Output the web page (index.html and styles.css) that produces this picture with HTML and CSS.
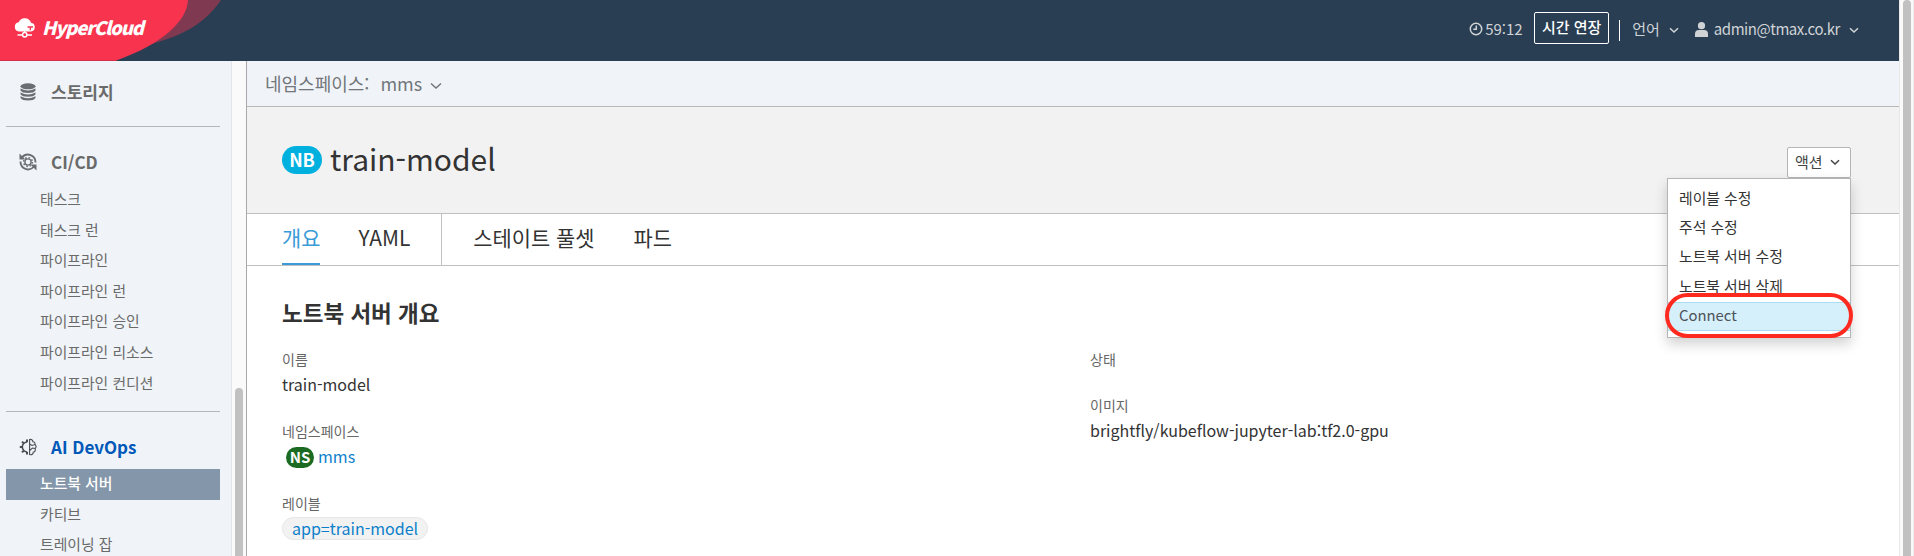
FILE: index.html
```html
<!DOCTYPE html>
<html lang="ko">
<head>
<meta charset="utf-8">
<title>HyperCloud</title>
<link rel="stylesheet" href="styles.css">
</head>
<body>
<div class="window">
  <div class="app">
    <header class="masthead">
      <div class="brand">
        <svg class="brand-bg" width="240" height="61" viewBox="0 0 240 61"><path fill="#7f3950" d="M100 0H221C207 20 190 33 155 43L100 61Z"/><path fill="#f7334e" d="M0 0H188C187 20 165 43 115 61H0Z"/><path fill="#d52f4b" d="M0 60H117L114 61H0Z"/></svg>
        <div class="brand-name">
          <svg width="22" height="20" viewBox="0 0 22 20"><path fill="#fff" d="M5 13.500a4.700 4.700 0 0 1-.3-9.300A6.600 6.600 0 0 1 17 4.800 4.400 4.400 0 0 1 17 13.500Z"/><path stroke="#f7334e" stroke-width="1.300" fill="none" d="M13.500 9h5.500M16.300 9V12.200"/><path stroke="#fff" stroke-width="1.300" fill="none" d="M3.500 17h5M13 17h5M10.700 12v3"/><circle cx="10.700" cy="16.800" r="2.200" fill="#f7334e" stroke="#fff" stroke-width="1.500"/></svg>
          <span>HyperCloud</span>
        </div>
      </div>
      <div class="tools">
        <svg class="clock" width="14" height="14" viewBox="0 0 14 14"><circle cx="7" cy="7" r="5.700"/><path d="M7.300 3.500V7.300H4.300"/></svg>
        <span class="time">59:12</span>
        <button class="extend">시간 연장</button>
        <span class="bar"></span>
        <span class="lang">언어</span>
        <svg class="chev c1" width="10" height="7" viewBox="0 0 10 7"><path d="M1 1.200 5 5 9 1.200"/></svg>
        <svg class="user" width="13" height="15" viewBox="0 0 13 15"><circle cx="6.500" cy="3.700" r="3.600"/><path d="M0 15V12Q0 8 4 8H9Q13 8 13 12V15Z"/></svg>
        <span class="mail">admin@tmax.co.kr</span>
        <svg class="chev c2" width="10" height="7" viewBox="0 0 10 7"><path d="M1 1.200 5 5 9 1.200"/></svg>
      </div>
    </header>
    <div class="body">
      <nav class="sidebar">
        <div class="side-list">
          <section class="group storage">
            <h2><svg width="18" height="18" viewBox="0 0 18 18"><g fill="#6a6e73"><ellipse cx="9" cy="3.300" rx="7.500" ry="3"/><path d="M1.500 5.500Q9 9.700 16.500 5.500V7.500Q15 10 9 10T1.500 7.500Z"/><path d="M1.500 9.500Q9 13.700 16.500 9.500V11.200Q15 13.700 9 13.700T1.500 11.200Z"/><path d="M1.500 13.200Q9 17.400 16.500 13.200V15Q15 17.500 9 17.500T1.500 15Z"/></g></svg>스토리지</h2>
          </section>
          <section class="group cicd">
            <h2><svg width="18" height="18" viewBox="0 0 18 18"><g fill="none" stroke="#6a6e73"><circle cx="9" cy="9" r="3.100" stroke-width="1.400"/><circle cx="9" cy="9" r="4.400" stroke-width="1.500" stroke-dasharray="1.600 1.856"/><path stroke-width="1.900" d="M3 4.500A7.600 7.600 0 0 1 16.500 9.500M15 13.500A7.600 7.600 0 0 1 1.500 8.500"/></g><path fill="#6a6e73" d="M.5.500V6.500H6.500ZM17.500 17.500V11.500H11.500Z"/></svg>CI/CD</h2>
            <a>태스크</a><a>태스크 런</a><a>파이프라인</a><a>파이프라인 런</a><a>파이프라인 승인</a><a>파이프라인 리소스</a><a>파이프라인 컨디션</a>
          </section>
          <section class="group ai">
            <h2><svg width="18" height="18" viewBox="0 0 18 18"><g fill="none" stroke="#4a4d50"><path stroke-width="1.600" d="M8.300 4A5 5 0 0 0 8.300 14"/><path stroke-width="2" d="M8 1.500V4M8 14V16.500M4.800 5.400 3 3.600M4.800 12.600 3 14.400M3.500 9H.8"/><path stroke-width="1.100" d="M10.600 1.500V16.500C13 17.200 14.300 15.800 14.200 14.200 16.300 13.800 16.800 12 16 10.500 17.500 9.500 17.300 7.300 16 6.500 16.400 4.800 15.300 3.700 14 3.800 13.700 1.800 12.300 1 10.600 1.500ZM10.600 6 13 7.500 16 6.500M10.600 12.500 13.500 10 16 10.500"/></g></svg>AI DevOps</h2>
            <a class="active">노트북 서버</a><a>카티브</a><a>트레이닝 잡</a>
          </section>
        </div>
        <div class="side-track"><div class="side-thumb"></div></div>
      </nav>
      <main class="main">
        <div class="ns-bar"><span>네임스페이스:</span><span class="ns">mms</span><svg class="chev" width="12" height="8" viewBox="0 0 12 8"><path d="M1 1.500 6 6 11 1.500"/></svg></div>
        <div class="title-bar">
          <h1><span class="badge nb">NB</span><span class="title">train-model</span></h1>
          <div class="actions">
            <button class="action">액션<svg class="chev" width="10" height="7" viewBox="0 0 10 7"><path d="M1 1.200 5 5 9 1.200"/></svg></button>
            <div class="menu">
              <div>레이블 수정</div><div>주석 수정</div><div>노트북 서버 수정</div><div>노트북 서버 삭제</div>
              <div class="hover">Connect</div>
              <span class="ring"></span>
            </div>
          </div>
        </div>
        <div class="tabs"><div class="tab-set"><span class="tab on">개요</span><span class="tab">YAML</span></div><span class="tab">스테이트 풀셋</span><span class="tab">파드</span></div>
        <div class="content">
          <h3>노트북 서버 개요</h3>
          <div class="cols">
            <dl>
              <dt>이름</dt><dd>train-model</dd>
              <dt>네임스페이스</dt><dd class="link ns-link"><span class="badge nsb">NS</span>mms</dd>
              <dt>레이블</dt><dd class="link"><span class="chip">app=train-model</span></dd>
            </dl>
            <dl>
              <dt>상태</dt><dd class="none"></dd>
              <dt>이미지</dt><dd>brightfly/kubeflow-jupyter-lab:tf2.0-gpu</dd>
            </dl>
          </div>
        </div>
      </main>
    </div>
  </div>
  <div class="page-track"><div class="page-thumb"></div></div>
</div>
</body>
</html>
```

FILE: styles.css
```css
* { box-sizing: border-box; }
body { margin: 0; overflow: hidden; font-family: "Noto Sans CJK KR", sans-serif; font-feature-settings: "calt" 0; color: #333; background: #fff; }
h1, h2, h3, dl, dd { margin: 0; font-weight: 400; }
button { font-family: inherit; padding: 0; }
svg { flex: none; }
.window { display: flex; width: 1914px; height: 556px; overflow: hidden; }
.app { width: 1899px; display: flex; flex-direction: column; }
.page-track { width: 15px; background: #fafafa; border-left: 1px solid #e8e8e8; border-right: 1px solid #ececec; padding-left: 3px; }
.page-thumb { width: 8px; height: 600px; border-radius: 4px; background: #c1c1c1; }

.masthead { height: 61px; flex: none; background: #293e53; display: flex; justify-content: space-between; }
.brand { position: relative; width: 240px; }
.brand-bg { display: block; }
.brand-name { position: absolute; left: 14px; top: 18px; display: flex; gap: 7px; color: #fff; font: italic 900 18.500px/20px "Noto Sans CJK KR", sans-serif; letter-spacing: -1.100px; }
.brand-name span { line-height: 19px; margin-left: -1px; }
.tools { display: flex; align-items: center; height: 58px; color: #d0d3d6; font-size: 15px; line-height: 22px; padding-right: 40px; }
.clock { fill: none; stroke: #d0d3d6; stroke-width: 1.500; }
.time { margin-left: 2px; width: 38px; }
.extend { margin-left: 11px; width: 75px; height: 32px; border: 1px solid #fff; border-radius: 2px; background: none; color: #fff; font-size: 15px; font-weight: 500; line-height: 28px; margin-top: -2px; padding-bottom: 2px; }
.bar { width: 1px; height: 21px; background: #fff; margin: 2px 12px 0 10px; }
.chev { fill: none; stroke: currentColor; stroke-width: 1.500; }
.c1 { margin: 2px 16px 0 9px; }
.user { fill: #d0d3d6; margin-right: 6px; }
.mail { font-size: 15px; letter-spacing: -0.450px; }
.c2 { margin: 2px 0 0 9px; }

.body { flex: 1; display: flex; min-height: 0; }
.sidebar { width: 247px; flex: none; display: flex; background: #f0f4f8; border-right: 1px solid #a8a8a8; overflow: hidden; }
.side-list { width: 231px; padding: 0 11px 0 6px; }
.side-track { width: 15px; background: #fafafa; border-left: 1px solid #e3e5e8; padding: 327px 0 0 3px; }
.side-thumb { width: 8px; height: 300px; border-radius: 4px; background: #c1c1c1; }
.group { border-bottom: 1px solid #b3b7bb; color: #6a6a6a; }
.group h2 { display: flex; align-items: center; height: 30px; font-size: 17px; font-weight: 700; line-height: 30px; padding-left: 13px; }
.group h2 svg { margin-right: 14px; }
.group a { display: block; height: 30.6px; line-height: 28px; font-size: 14.850px; padding-left: 34px; font-weight: 400; }
.storage { height: 66px; padding-top: 16px; }
.cicd { height: 285px; padding-top: 20px; }
.cicd h2 { margin-bottom: 8px; }
.ai { border: 0; padding-top: 20px; }
.ai h2 { color: #0058b8; margin-bottom: 7px; }
.group .active { background: #8496a9; color: #fff; font-weight: 500; }

.main { flex: 1; min-width: 0; display: flex; flex-direction: column; }
.ns-bar { height: 46px; flex: none; background: #f0f4f8; border-bottom: 1px solid #b8b8b8; display: flex; align-items: center; padding: 0 0 1px 18px; font-size: 18px; color: #72767b; line-height: 26px; }
.ns { margin: 0 8px 0 11px; }
.ns-bar .chev { margin-top: 5px; }
.title-bar { height: 107px; flex: none; background: #f2f2f2; border-bottom: 1px solid #c0c0c0; display: flex; justify-content: space-between; padding: 0 48px 0 35px; }
h1 { display: flex; align-items: center; height: 106px; }
.badge { color: #fff; font-weight: 700; text-align: center; }
.nb { width: 40px; height: 28px; border-radius: 14px; background: #00b0df; font-size: 18px; line-height: 27px; margin-right: 8px; }
.title { font-size: 30px; line-height: 46px; padding-bottom: 5px; }
.actions { position: relative; padding-top: 40px; }
.action { display: flex; align-items: center; justify-content: space-between; width: 64px; height: 31px; border: 1px solid #b5b5b5; border-radius: 2px; background: #fff; font-size: 15px; line-height: 28px; color: #444; padding: 0 10px 2px 7px; }
.action .chev { margin-top: 2px; }
.menu { position: absolute; z-index: 2; right: 0; top: 71px; width: 184px; height: 160px; background: #fff; border: 1px solid #b5b5b5; box-shadow: 0 6px 12px rgba(0,0,0,.18); padding-top: 6px; font-size: 14.850px; color: #333; }
.menu div { height: 29.2px; line-height: 26px; padding-left: 11px; }
.menu .hover { margin-top: 0; background: #d5effb; border: solid #a9dcf2; border-width: 1px 0; color: #4d5258; line-height: 24px; }
.ring { position: absolute; left: -3px; top: 114px; width: 188px; height: 45px; border: 4px solid #ff2a1f; border-radius: 23px; }
.tabs { height: 52px; flex: none; display: flex; border-bottom: 1px solid #c0c0c0; padding-left: 35px; font-size: 20.900px; line-height: 47px; }
.tab-set { display: flex; gap: 38px; padding-right: 31px; margin-right: 31px; border-right: 1px solid #c0c0c0; }
.tab { margin-right: 39px; height: 51px; }
.tab-set .tab { margin: 0; }
.on { color: #3a9bd8; border-bottom: 2px solid #3a9bd8; }
.content { padding: 28px 35px 0; }
h3 { font-size: 22.500px; font-weight: 700; line-height: 36px; }
.cols { display: grid; grid-template-columns: 808px 1fr; padding-top: 19px; }
dt { font-size: 14px; line-height: 20px; color: #666; }
dd { font-size: 16px; line-height: 24px; height: 34px; margin: 3px 0 15px; }
dd.none { height: 8px; }
.link { color: #0d7fca; }
.ns-link { padding-left: 4px; }
.nsb { display: inline-block; width: 28px; height: 21px; border-radius: 11px; background: #1c6b22; font-size: 15px; line-height: 20px; margin-right: 4px; }
.chip { display: inline-block; height: 23px; line-height: 21px; border: 1px solid #e6e6e6; border-radius: 12px; background: #f2f2f2; padding: 0 9px; }
```
